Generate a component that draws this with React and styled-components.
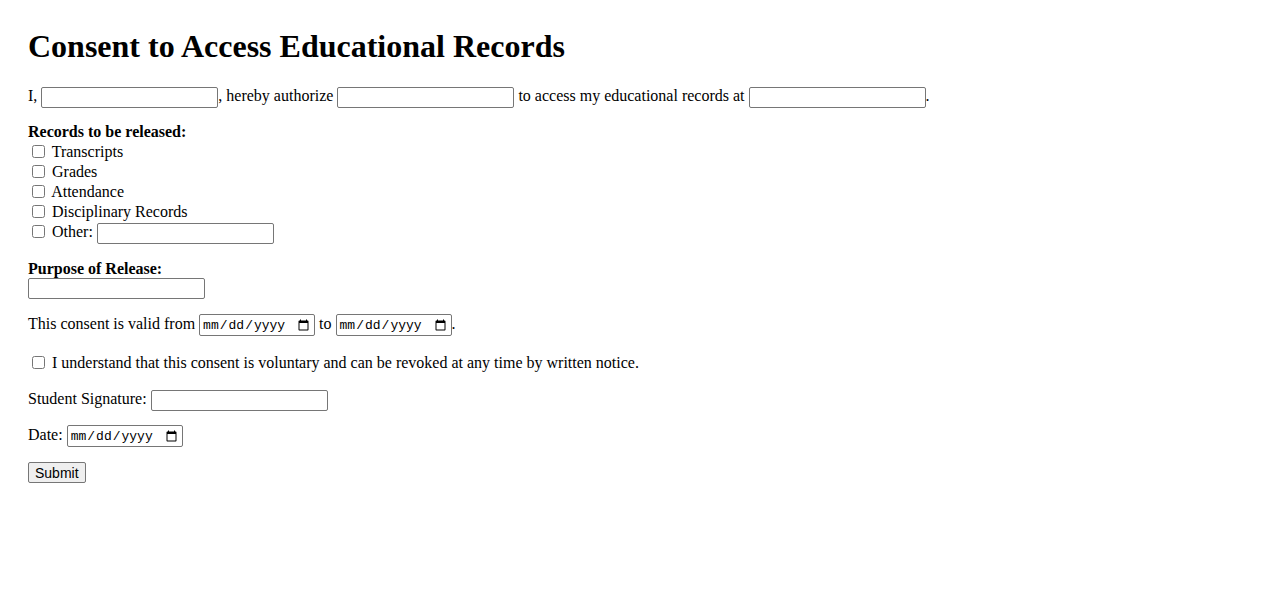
import styled, { createGlobalStyle } from "styled-components"

const GlobalStyle = createGlobalStyle`
  html, body {
    margin: 0;
    padding: 0;
    background: #fff;
  }
  body {
    font-family: "Liberation Serif", "Times New Roman", serif;
    font-size: 16px;
    color: #000;
  }
`

const Page = styled.div`
  padding: 28px 28px 20px;
`

const Title = styled.h1`
  font-size: 32px;
  font-weight: bold;
  margin: 0 0 21px;
`

const Form = styled.form`
  display: block;
`

const Field = styled.div`
  margin-bottom: ${(p) => p.$gap ?? 16}px;
  line-height: 20px;
`

const Heading = styled.label`
  display: block;
  font-weight: bold;
  line-height: ${(p) => p.$line ?? 19}px;
`

const CheckRow = styled.div`
  height: 20px;
`

const Check = styled.input.attrs({ type: "checkbox" })`
  width: 13px;
  height: 13px;
  margin: 3px 3px 3px 4px;
  vertical-align: top;
`

const TextInput = styled.input.attrs({ type: "text" })`
  box-sizing: border-box;
  display: ${(p) => (p.$block ? "block" : "inline-block")};
  width: 177px;
  height: 21px;
  padding: 1px 2px;
  border: 1px solid #767676;
  border-radius: 2px;
  font-family: "Liberation Sans", Arial, sans-serif;
  font-size: 13.33px;
  vertical-align: middle;
`

const DateInput = styled.input.attrs({ type: "date" })`
  box-sizing: border-box;
  width: 116px;
  height: 22px;
  padding: 1px 2px;
  border: 1px solid #767676;
  border-radius: 2px;
  font-family: "Liberation Mono", monospace;
  font-size: 13px;
  vertical-align: middle;
`

const Button = styled.button`
  box-sizing: border-box;
  height: 21px;
  padding: 0 6px;
  border: 1px solid #767676;
  border-radius: 2px;
  background: #efefef;
  color: #000;
  font-family: "Liberation Sans", Arial, sans-serif;
  font-size: 14px;
`

const records = [
  "Transcripts",
  "Grades",
  "Attendance",
  "Disciplinary Records",
]

const App = () => {
  return (
    <Page>
      <GlobalStyle />
      <Title>Consent to Access Educational Records</Title>
      <Form onSubmit={(event) => event.preventDefault()}>
        <Field $gap={14}>
          I, <TextInput />, hereby authorize <TextInput /> to access my
          educational records at <TextInput />.
        </Field>

        <Field $gap={17}>
          <Heading $line={20}>Records to be released:</Heading>
          {records.map((name) => (
            <CheckRow key={name}>
              <Check /> {name}
            </CheckRow>
          ))}
          <CheckRow>
            <Check /> Other: <TextInput />
          </CheckRow>
        </Field>

        <Field $gap={15}>
          <Heading>Purpose of Release:</Heading>
          <TextInput $block />
        </Field>

        <Field $gap={17}>
          This consent is valid from <DateInput /> to <DateInput />.
        </Field>

        <Field>
          <Check /> I understand that this consent is voluntary and can be
          revoked at any time by written notice.
        </Field>

        <Field $gap={14}>
          Student Signature: <TextInput />
        </Field>

        <Field $gap={15}>
          Date: <DateInput />
        </Field>

        <Button type="submit">Submit</Button>
      </Form>
    </Page>
  )
}

export default App
